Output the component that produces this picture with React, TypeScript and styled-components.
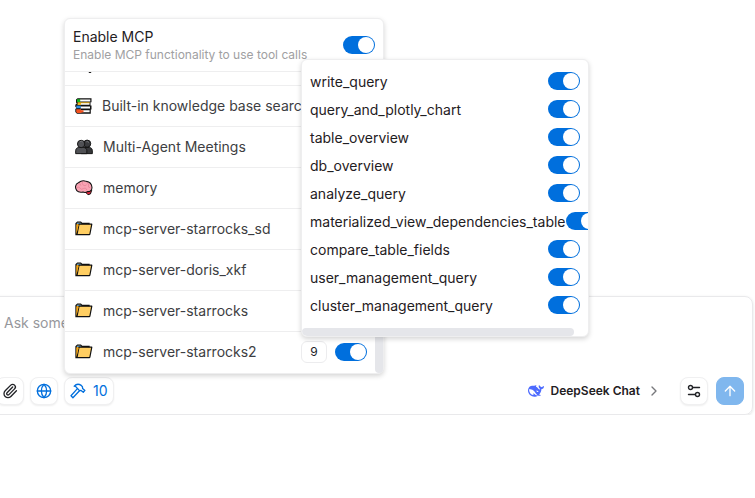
import React from "react";
import styled, { createGlobalStyle } from "styled-components";
import { ArrowUp, ChevronRight, Globe, Paperclip } from "lucide-react";

const GlobalStyle = createGlobalStyle`
  *, *::before, *::after { box-sizing: border-box; }
  body {
    margin: 0;
    background: #fff;
    color: #1f2023;
    font-family: Inter, "Liberation Sans", sans-serif;
    font-size: 14px;
    line-height: 20px;
    overflow: hidden;
  }
  button, input, textarea { font: inherit; color: inherit; }
`;

const Page = styled.main`
  display: flex;
  flex-direction: column;
  padding: 296px 2px 0 0;
`;

const Composer = styled.form`
  display: flex;
  flex-direction: column;
  gap: 24px;
  margin-left: -16px;
  padding: 16px 8px 9px 11px;
  border: 1px solid #e9e9eb;
  border-radius: 8px;
  box-shadow: 0 1px 3px rgba(0, 0, 0, 0.12);
`;

const Prompt = styled.textarea`
  height: 40px;
  padding: 0 8px;
  border: 0;
  outline: 0;
  resize: none;
  background: none;
  &::placeholder { color: #97989c; opacity: 1; }
`;

const Toolbar = styled.div`
  display: flex;
  align-items: center;
  gap: 6px;
`;

const ToolButton = styled.button<{ $accent?: boolean }>`
  display: flex;
  align-items: center;
  justify-content: center;
  gap: 7px;
  min-width: 28px;
  height: 28px;
  padding: 0 5px;
  border: 1px solid #f0f0f1;
  border-radius: 8px;
  background: #fff;
  box-shadow: 0 1px 2px rgba(0, 0, 0, 0.07);
  color: ${(p) => (p.$accent ? "#006fdd" : "#222327")};
`;

const SendButton = styled(ToolButton)`
  margin-left: 2px;
  border-color: #80b7ee;
  background: #80b7ee;
  color: #fff;
  box-shadow: none;
`;

const ModelButton = styled.button`
  display: flex;
  align-items: center;
  gap: 6px;
  margin: 0 12px 0 auto;
  padding: 0;
  border: 0;
  background: none;
  font-size: 12px;
  font-weight: 600;
  svg:last-child { color: #77787c; }
`;

const MenuAnchor = styled.div`
  position: relative;
`;

const Menu = styled.section`
  position: absolute;
  z-index: 1;
  left: 0;
  bottom: calc(100% + 3px);
  width: 320px;
  border: 1px solid #eeeeef;
  border-radius: 6px;
  background: #fff;
  box-shadow: 0 2px 5px rgba(0, 0, 0, 0.17);
`;

const MenuHeader = styled.label`
  display: flex;
  align-items: center;
  justify-content: space-between;
  height: 53px;
  padding: 0 8px;
  border-bottom: 1px solid #eeeeef;
`;

const HeaderText = styled.span`
  display: flex;
  flex-direction: column;
  padding-top: 2px;
  line-height: 18px;
  small { color: #a0a0a2; font-size: 12px; }
`;

const ServerList = styled.ul`
  display: flex;
  flex-direction: column;
  justify-content: flex-end;
  height: 301px;
  margin: 0;
  padding: 0;
  overflow: hidden;
  list-style: none;
`;

const ServerRow = styled.li`
  display: flex;
  flex: none;
  align-items: center;
  gap: 10px;
  height: 41px;
  padding: 0 16px 0 10px;
  border-bottom: 1px solid #eeeeef;
  color: #3d3e42;
  &:last-child { border-bottom-color: transparent; }
`;

const RowControls = styled.span`
  display: flex;
  align-items: center;
  gap: 8px;
  margin-left: auto;
`;

const CountButton = styled.button`
  width: 26px;
  height: 22px;
  padding: 0;
  border: 1px solid #ececee;
  border-radius: 6px;
  background: #fff;
  color: #222327;
  font-size: 12px;
`;

const Switch = styled.input`
  display: flex;
  flex: none;
  width: 32px;
  height: 18px;
  margin: 0;
  padding: 1px;
  border-radius: 9px;
  appearance: none;
  background: #c9cbd0;
  &::before {
    content: "";
    width: 16px;
    height: 16px;
    border-radius: 50%;
    background: #fff;
  }
  &:checked { justify-content: flex-end; background: #006fdd; }
`;

const VerticalThumb = styled.div`
  position: absolute;
  right: 0;
  bottom: 0;
  width: 8px;
  height: 240px;
  border-radius: 6px;
  background: #e5e6ea;
`;

const SubMenu = styled.section`
  position: absolute;
  left: 236px;
  top: 40px;
  width: 288px;
  border: 1px solid #eeeeef;
  border-radius: 6px;
  background: #fff;
  box-shadow: 0 2px 5px rgba(0, 0, 0, 0.17);
  overflow: hidden;
`;

const ToolList = styled.ul`
  margin: 0;
  padding: 8px;
  list-style: none;
`;

const ToolRow = styled.label`
  display: flex;
  align-items: flex-start;
  justify-content: space-between;
  height: 28px;
  padding-top: 4px;
  line-height: 20px;
  white-space: nowrap;
`;

const HorizontalThumb = styled.div`
  width: 95%;
  height: 8px;
  border-radius: 4px;
  background: #e5e6ea;
`;

const FolderIcon = () => (
  <svg width="18" height="18" viewBox="0 0 18 18" aria-hidden="true">
    <path d="M1 14.5V3.5L2.5 2.2h3.2L7 3.5h7v11z" fill="#f2a516" stroke="#111" strokeWidth="1.3" />
    <path d="M2 2.7h3.6l.9 1.4H2z" fill="#5595c5" />
    <path d="M4 4.2h12.8l-2 10.3H2z" fill="#ffce62" stroke="#111" strokeWidth="1.2" strokeLinejoin="round" />
    <path d="M1.4 4.7v9.3l2.4-9.3z" fill="#f2a516" />
  </svg>
);

const BooksIcon = () => (
  <svg width="17" height="18" viewBox="0 0 17 18" aria-hidden="true">
    <path d="M2.5 1.2h14v4h-1v3.3h1v4h-.7v4.3H2L.3 15V12L1.5 11 .3 9.8V7.8l1.5-1.2-.8-1V2.5z" fill="#111" />
    <path d="M5 2.5h10.3v2H5zM6 6.1h8.5v1.7H6zM5.5 9.4H15v2H5.5zM5 13.2h9.6v2H5z" fill="#fff" />
    <path d="M2 2.2h3.2v2.8H2z" fill="#13b51c" />
    <path d="M2.6 5.2h12.2v1H6v1.8H2.6z" fill="#efb41c" />
    <path d="M1.3 8.6h4.5v2.6H1.3z" fill="#2f8ee5" />
    <path d="M1.2 12.2h4.8v1h2.5v2H6.5v.7H2.1l-.9-1z" fill="#f4511e" />
  </svg>
);

const PeopleIcon = () => (
  <svg width="18" height="18" viewBox="0 0 19 18" aria-hidden="true">
    <g stroke="#111" strokeWidth="1">
      <path d="M6.5 16v-3c0-2 1.5-3.5 3.5-3.5h5c2 0 3.3 1.4 3.3 3.3V16z" fill="#36373a" />
      <circle cx="12.8" cy="5.5" r="3.8" fill="#3a3b3e" />
      <path d="M.7 16v-3c0-2 1.3-3.5 3.3-3.5h5c2 0 3.5 1.4 3.5 3.3V16z" fill="#505155" />
      <circle cx="6.5" cy="5.8" r="3.9" fill="#505155" />
    </g>
    <path d="M5 3.5q2-1.3 3.2.2M12 3.5q1.7-.8 2.7.8" fill="none" stroke="#77787c" />
  </svg>
);

const BrainIcon = () => (
  <svg width="18" height="18" viewBox="0 0 19 18" aria-hidden="true">
    <path d="M10 12.3l3.7 3.8 2.6-.8 1.4-4z" fill="#e5263b" stroke="#111" />
    <path d="M1 10C-.1 7 1.5 4.3 4 3.2 6.2 1.3 9.2 1 12 2c3.5.5 5.7 3.3 5.9 6.2.2 3-2 4.9-4.7 4.6-1.7 1.1-3.6.9-4.8.4C5 14 1.6 13 1 10z" fill="#f9a3b3" stroke="#111" strokeWidth="1.1" />
    <path d="M4 4.5q2-.2 2.2 2M8 2.5q-1 2 .8 3.5t3.5-.5M2 8.5q2.3-1.2 3.5.8t3.5.2 3.5 1.6M13 4q2 .3 1.3 2.4t1.8 2.4" fill="none" stroke="#e27d91" strokeWidth=".7" />
  </svg>
);

const SearchIcon = () => (
  <svg width="18" height="18" viewBox="0 0 18 18" aria-hidden="true">
    <circle cx="7" cy="6.5" r="5" fill="#bfe3f5" stroke="#111" strokeWidth="1.4" />
    <path d="M11 10.5l4 5" stroke="#111" strokeWidth="3" strokeLinecap="round" />
  </svg>
);

const HammerIcon = () => (
  <svg width="16" height="16" viewBox="0 0 16 16" fill="none" stroke="currentColor" strokeWidth="1.3" strokeLinecap="round" strokeLinejoin="round" aria-hidden="true">
    <path d="M4.2 3.2C6 1.2 9 .9 11.2 2.4l1.2 1.3.2 1.7 2.3 2-1.6 1.8-2.2-1.8-1.6.2-2.3-2.3C6.6 4.2 5.7 3.4 4.2 3.2z" />
    <path d="M7.4 5.6L1 12.8l1.9 1.9 6.6-7" />
  </svg>
);

const SettingsIcon = () => (
  <svg width="14" height="14" viewBox="0 0 14 14" fill="none" stroke="currentColor" strokeWidth="1.4" strokeLinecap="round" aria-hidden="true">
    <circle cx="3.5" cy="3.5" r="2" />
    <path d="M5.7 3.5h6.8M1.5 10.5h6.8" />
    <circle cx="10.5" cy="10.5" r="2" />
  </svg>
);

const DeepSeekIcon = () => (
  <svg width="16" height="16" viewBox="0 0 24 24" fill="#4d6bfe" fillRule="evenodd" aria-hidden="true">
    <path d="M23.748 4.482c-.254-.124-.364.113-.512.234-.051.039-.094.09-.137.136-.372.397-.806.657-1.373.626-.829-.046-1.537.214-2.163.848-.133-.782-.575-1.248-1.247-1.548-.352-.156-.708-.311-.955-.65-.172-.241-.219-.51-.305-.774-.055-.16-.11-.323-.293-.35-.2-.031-.278.136-.356.276-.313.572-.434 1.202-.422 1.84.027 1.436.633 2.58 1.838 3.393.137.093.172.187.129.323-.082.28-.18.552-.266.833-.055.179-.137.217-.329.14a5.526 5.526 0 01-1.736-1.18c-.857-.828-1.631-1.742-2.597-2.458a11.365 11.365 0 00-.689-.471c-.985-.957.13-1.743.388-1.836.27-.098.093-.432-.779-.428-.872.004-1.67.295-2.687.684a3.055 3.055 0 01-.465.137 9.597 9.597 0 00-2.883-.102c-1.885.21-3.39 1.102-4.497 2.623C.082 8.606-.231 10.684.152 12.85c.403 2.284 1.569 4.175 3.36 5.653 1.858 1.533 3.997 2.284 6.438 2.14 1.482-.085 3.133-.284 4.994-1.86.47.234.962.327 1.78.397.63.059 1.236-.03 1.705-.128.735-.156.684-.837.419-.961-2.155-1.004-1.682-.595-2.113-.926 1.096-1.296 2.746-2.642 3.392-7.003.05-.347.007-.565 0-.845-.004-.17.035-.237.23-.256a4.173 4.173 0 001.545-.475c1.396-.763 1.96-2.015 2.093-3.517.02-.23-.004-.467-.247-.588zM11.581 18c-2.089-1.642-3.102-2.183-3.52-2.16-.392.024-.321.471-.235.763.09.288.207.486.371.739.114.167.192.416-.113.603-.673.416-1.842-.14-1.897-.167-1.361-.802-2.5-1.86-3.301-3.307-.774-1.393-1.224-2.887-1.298-4.482-.02-.386.093-.522.477-.592a4.696 4.696 0 011.529-.039c2.132.312 3.946 1.265 5.468 2.774.868.86 1.525 1.887 2.202 2.891.72 1.066 1.494 2.082 2.48 2.914.348.292.625.514.891.677-.802.09-2.14.11-3.054-.614zM12.6 11.5a.6.6 0 01.8-.3c1 .4 2 1 2.2 1.7.1.7-1.1.9-1.8.4-.7-.5-1.2-1.1-1.2-1.8z" />
  </svg>
);

const servers = [
  { icon: <SearchIcon />, name: "" },
  { icon: <BooksIcon />, name: "Built-in knowledge base search" },
  { icon: <PeopleIcon />, name: "Multi-Agent Meetings" },
  { icon: <BrainIcon />, name: "memory" },
  { icon: <FolderIcon />, name: "mcp-server-starrocks_sd" },
  { icon: <FolderIcon />, name: "mcp-server-doris_xkf" },
  { icon: <FolderIcon />, name: "mcp-server-starrocks" },
  { icon: <FolderIcon />, name: "mcp-server-starrocks2", count: 9 },
];

const tools = [
  "write_query",
  "query_and_plotly_chart",
  "table_overview",
  "db_overview",
  "analyze_query",
  "materialized_view_dependencies_table",
  "compare_table_fields",
  "user_management_query",
  "cluster_management_query",
];

export default function App() {
  return (
    <Page>
      <GlobalStyle />
      <Composer onSubmit={(e: React.FormEvent) => e.preventDefault()}>
        <Prompt placeholder="Ask something" aria-label="Message" />
        <Toolbar>
          <ToolButton type="button" aria-label="Attach file">
            <Paperclip size={16} strokeWidth={2} />
          </ToolButton>
          <ToolButton type="button" $accent aria-label="Web search">
            <Globe size={16} strokeWidth={2} />
          </ToolButton>
          <MenuAnchor>
            <ToolButton type="button" $accent aria-expanded="true">
              <HammerIcon />
              10
            </ToolButton>
            <Menu aria-label="MCP servers">
              <MenuHeader>
                <HeaderText>
                  Enable MCP
                  <small>Enable MCP functionality to use tool calls</small>
                </HeaderText>
                <Switch type="checkbox" role="switch" defaultChecked />
              </MenuHeader>
              <ServerList>
                {servers.map((s, i) => (
                  <ServerRow key={i}>
                    {s.icon}
                    <span>{s.name}</span>
                    {s.count && (
                      <RowControls>
                        <CountButton type="button">{s.count}</CountButton>
                        <Switch type="checkbox" role="switch" aria-label={s.name} defaultChecked />
                      </RowControls>
                    )}
                  </ServerRow>
                ))}
              </ServerList>
              <VerticalThumb />
              <SubMenu aria-label="Tools">
                <ToolList>
                  {tools.map((tool) => (
                    <li key={tool}>
                      <ToolRow>
                        {tool}
                        <Switch type="checkbox" role="switch" defaultChecked />
                      </ToolRow>
                    </li>
                  ))}
                </ToolList>
                <HorizontalThumb />
              </SubMenu>
            </Menu>
          </MenuAnchor>
          <ModelButton type="button">
            <DeepSeekIcon />
            DeepSeek Chat
            <ChevronRight size={16} />
          </ModelButton>
          <ToolButton type="button" aria-label="Chat settings">
            <SettingsIcon />
          </ToolButton>
          <SendButton type="submit" aria-label="Send">
            <ArrowUp size={16} strokeWidth={2} />
          </SendButton>
        </Toolbar>
      </Composer>
    </Page>
  );
}
